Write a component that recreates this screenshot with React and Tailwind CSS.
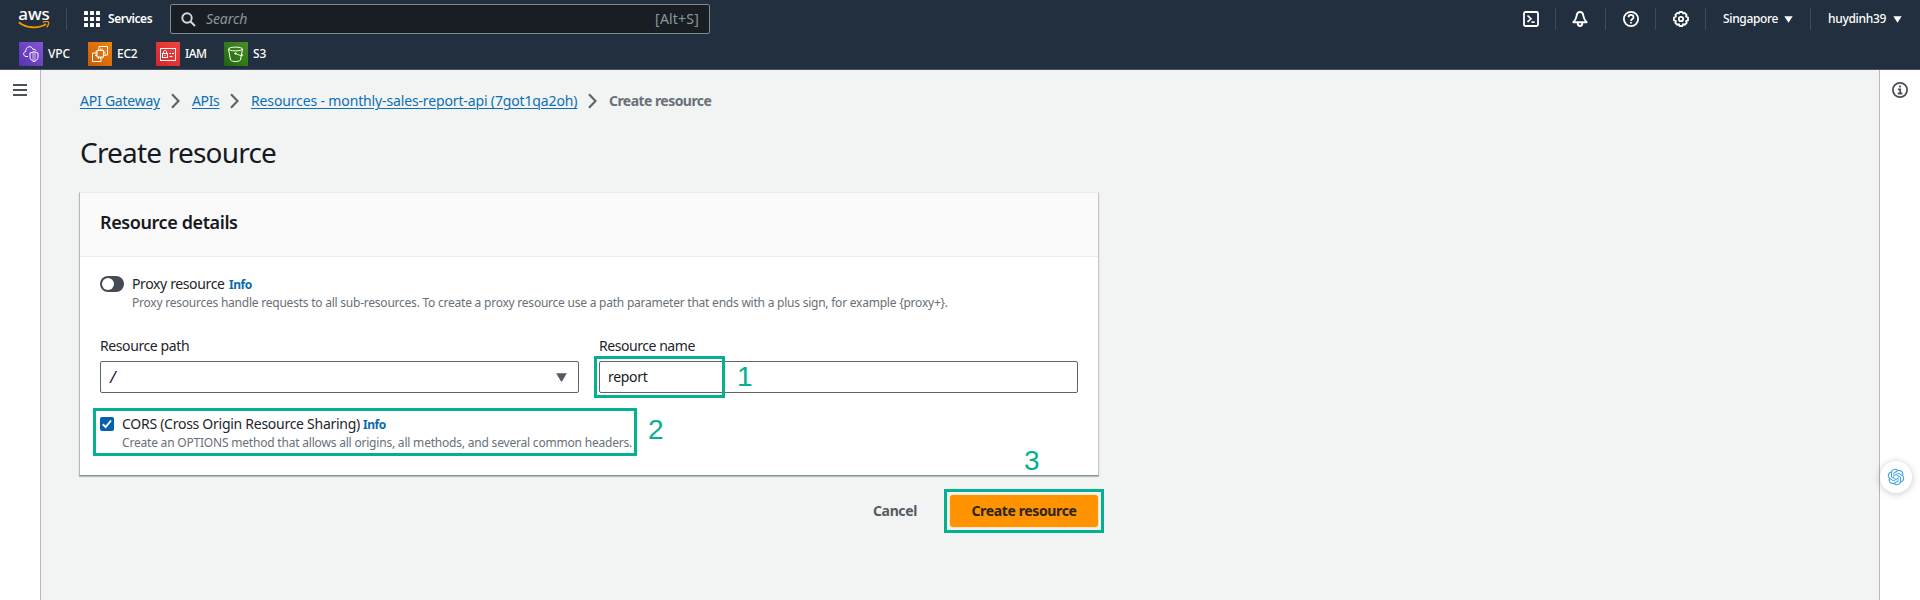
import { RiOpenaiFill } from "react-icons/ri";

function Sep() {
  return <div className="h-[22px] w-px shrink-0 bg-[#3c4a59]" />;
}

function AwsLogo() {
  return (
    <div className="flex w-[32px] flex-col items-center">
      <span className="h-[12px] text-[17px] leading-[9px] font-medium tracking-[-0.1px] text-white">aws</span>
      <svg width="32" height="8" viewBox="0 0 32 8" fill="none" stroke="#f79400">
        <path d="M0.8 1.2C8.5 7.6 20.5 7.8 28.2 3" strokeWidth="1.9" />
        <path d="M24.8 1.3C27 0.5 29.8 0.4 30.5 1.1S30.2 4.6 28.7 6.2" strokeWidth="1.3" />
      </svg>
    </div>
  );
}

function GridIcon() {
  const p = [0, 6, 12];
  return (
    <svg width="16" height="16" viewBox="0 0 16 16" fill="#fff">
      {p.map((y) => p.map((x) => <rect key={`${x}-${y}`} x={x} y={y} width="4" height="4" rx="0.6" />))}
    </svg>
  );
}

function VpcIcon() {
  return (
    <svg width="24" height="24" viewBox="0 0 24 24" fill="none" stroke="#fff" strokeWidth="1">
      <path d="M9 14.5H7c-3-.5-3.2-4.500-.2-5C6.500 4 12.500 3 14 7.500c1.500-.8 3 .3 2.800 1.800" />
      <path d="M11 11c1.800-.2 2.600-.8 4-1.500 1.200.7 2 1.300 4 1.500v4c0 2.500-2.200 3.800-4 4.700-1.800-.9-4-2.200-4-4.700z" />
      <path d="M14 10v9M16 10v9" strokeWidth="0.7" />
    </svg>
  );
}

function Ec2Icon() {
  return (
    <svg width="24" height="24" viewBox="0 0 24 24" fill="none" stroke="#fff" strokeWidth="1">
      <path d="M11 6.500V4.500h8.500v8.500h-2.500M7 11H4.500v8.500H13V17" />
      <rect x="9" y="8.500" width="6.500" height="6.500" />
      <path d="M10.500 6.500v2M12.250 6.500v2M14 6.500v2M10.500 15v2M12.250 15v2M14 15v2M7 10h2M7 11.750h2M7 13.500h2M15.500 10h2M15.500 11.750h2M15.500 13.500h2" strokeWidth="0.9" />
    </svg>
  );
}

function IamIcon() {
  return (
    <svg width="24" height="24" viewBox="0 0 24 24" fill="none" stroke="#fff" strokeWidth="1">
      <rect x="4.500" y="6.500" width="15" height="12" />
      <rect x="6.500" y="11.500" width="5" height="4" />
      <path d="M7.500 11.500V10c0-2 3-2 3 0v1.500M9 13v1M13.500 11.500H15M16 11.500h2M13.500 14.500h3" />
    </svg>
  );
}

function S3Icon() {
  return (
    <svg width="24" height="24" viewBox="0 0 24 24" fill="none" stroke="#fff" strokeWidth="1">
      <ellipse cx="11.500" cy="7" rx="7" ry="1.900" />
      <path d="M4.500 7l2 11c1.800 2 8.200 2 10 0l2-11" />
      <path d="M11.500 11.500c3 1.500 5.500 2.300 7 2.200.8-.5-.2-1.400-1-1.700" />
      <circle cx="11.500" cy="11.500" r="0.700" fill="#fff" />
    </svg>
  );
}

function Shell() {
  return (
    <svg width="16" height="16" viewBox="0 0 16 16" fill="none" stroke="#fff" strokeWidth="1.8">
      <rect x="1" y="1" width="14" height="14" rx="1.500" />
      <path d="M4.500 4.500L8 7.800l-3.500 3.200M8.500 11.200h3.200" strokeWidth="1.700" />
    </svg>
  );
}

function Bell() {
  return (
    <svg width="16" height="16" viewBox="0 0 16 16" fill="none" stroke="#fff" strokeWidth="1.9" strokeLinejoin="round">
      <path d="M8 1C5.800 1 4.800 3 4.600 5c-.3 2.800-1.200 4-3.300 6.300h13.400C12.600 9 11.700 7.800 11.400 5 11.200 3 10.200 1 8 1z" />
      <path d="M5.700 12c0 4 4.600 4 4.600 0" />
    </svg>
  );
}

function Help() {
  return (
    <svg width="16" height="16" viewBox="0 0 16 16" fill="none" stroke="#fff" strokeWidth="1.8">
      <circle cx="8" cy="8" r="7.100" />
      <path d="M5.500 6.200c0-3.200 5-3.200 5 0 0 1.700-2.500 1.800-2.500 3.800M8 11v1.600" />
    </svg>
  );
}

function Gear() {
  return (
    <svg width="16" height="16" viewBox="0 0 16 16" fill="none" stroke="#fff" strokeWidth="1.800" strokeLinejoin="round">
      <path d="M6.600 1h2.800l.6 1.500 1.600-.6 2 2-.6 1.500 2 1.200v2.800l-2 .8.700 1.700-2 2-1.700-.7L9.400 15H6.600L6 13.200l-1.700.7-2-2 .7-1.700-2-.8V6.600l2-1.200-.6-1.500 2-2 1.600.6z" />
      <circle cx="8" cy="8" r="2.200" />
    </svg>
  );
}

function Caret({ className }) {
  return (
    <svg width="9" height="7" viewBox="0 0 9 7" className={className}>
      <path d="M0.300 0.300h8.400L4.500 6.800z" fill="currentColor" />
    </svg>
  );
}

function Chevron() {
  return (
    <svg width="9" height="16" viewBox="0 0 9 16" fill="none" stroke="#5f6468" strokeWidth="2.200" className="shrink-0">
      <path d="M1 1.200L7.500 8 1 14.800" />
    </svg>
  );
}

const link = "text-[#0d6fb4] underline decoration-1 underline-offset-2";

export default function App() {
  return (
    <div className="flex h-[600px] w-[1920px] flex-col overflow-hidden bg-[#f2f4f4] font-['Noto_Sans',sans-serif] text-[14px] leading-[22px] text-[#16191f]">
      <header className="h-[70px] shrink-0 border-b border-[#4a5563] bg-[#222f3e] text-[12px] font-medium text-white">
        <div className="flex h-[38px] items-center pl-[18px]">
          <AwsLogo />
          <div className="ml-[16px] flex"><Sep /></div>
          <div className="ml-[17px] flex items-center gap-[8px]">
            <GridIcon />
            <span className="w-[62px] font-semibold tracking-[-0.45px]">Services</span>
          </div>
          <div className="flex h-[30px] w-[540px] items-center rounded-[2px] border border-[#7d8a8c] bg-[#191e24] pr-[10px] pl-[10px] text-[14px] font-normal text-[#8a9899]">
            <svg width="15" height="15" viewBox="0 0 15 15" fill="none" stroke="#d5dbdb" strokeWidth="1.900">
              <circle cx="6" cy="6" r="4.700" />
              <path d="M9.500 9.500l4.500 4.500" />
            </svg>
            <span className="ml-[10px] flex-1 tracking-[-0.1px] italic">Search</span>
            <span className="tracking-[0.2px]">[Alt+S]</span>
          </div>
          <div className="ml-auto flex items-center">
            <Shell />
            <div className="mx-[16px]"><Sep /></div>
            <Bell />
            <div className="mr-[17px] ml-[17px]"><Sep /></div>
            <Help />
            <div className="mr-[17px] ml-[16px]"><Sep /></div>
            <Gear />
            <div className="mr-[17px] ml-[16px]"><Sep /></div>
            <span className="w-[61px] tracking-[-0.35px]">Singapore</span>
            <Caret />
            <div className="mr-[17px] ml-[17px]"><Sep /></div>
            <span className="w-[65px] tracking-[-0.3px]">huydinh39</span>
            <Caret className="mr-[18px]" />
          </div>
        </div>
        <nav className="flex h-[24px] items-center pl-[19px] leading-[24px] [&>span]:ml-[5px]">
          <div className="mt-[8px] bg-gradient-to-tr from-[#5732b0] to-[#8455d8]"><VpcIcon /></div>
          <span className="mt-[7px] w-[40px] tracking-[-0.1px]">VPC</span>
          <div className="mt-[8px] bg-gradient-to-tr from-[#cc5a08] to-[#ea850f]"><Ec2Icon /></div>
          <span className="mt-[7px] w-[39px] tracking-[-0.3px]">EC2</span>
          <div className="mt-[8px] bg-gradient-to-tr from-[#d6242d] to-[#f04440]"><IamIcon /></div>
          <span className="mt-[7px] w-[39px] tracking-[-0.5px]">IAM</span>
          <div className="mt-[8px] bg-gradient-to-tr from-[#1b660f] to-[#4a8f22]"><S3Icon /></div>
          <span className="mt-[7px]">S3</span>
        </nav>
      </header>

      <div className="flex flex-1">
        <aside className="flex w-[41px] flex-col border-r border-[#b3b8ba] bg-white pt-[14px] pl-[13px]">
          <button className="flex w-[14px] flex-col gap-[3px]">
            <span className="h-[2px] bg-[#4c5156]" />
            <span className="h-[2px] bg-[#4c5156]" />
            <span className="h-[2px] bg-[#4c5156]" />
          </button>
        </aside>

        <main className="flex-1 pt-[20px] pl-[38px]">
          <nav className="flex items-center pl-px">
            <a className={`${link} w-[80px] tracking-[-0.230px] whitespace-nowrap`}>API Gateway</a>
            <div className="ml-[11px]"><Chevron /></div>
            <a className={`${link} ml-[12px] w-[27px] tracking-[-0.350px]`}>APIs</a>
            <div className="ml-[11px]"><Chevron /></div>
            <a className={`${link} ml-[12px] w-[326px] tracking-[-0.140px] whitespace-nowrap`}>Resources - monthly-sales-report-api (7got1qa2oh)</a>
            <div className="ml-[11px]"><Chevron /></div>
            <span className="ml-[12px] font-bold tracking-[-0.550px] text-[#687078]">Create resource</span>
          </nav>
          <h1 className="mt-[22px] pl-px text-[28px] leading-[36px] tracking-[-0.800px]">Create resource</h1>

          <div className="relative w-[1020px]">
            <section className="mt-[22px] h-[284px] border border-t-[#e9ebed] border-r-[#c3c7c9] border-b-[#8b9092] border-l-[#b4b9bb] bg-white px-[20px] shadow-[0_1px_1px_rgba(0,28,36,0.25)]">
              <div className="-mx-[20px] h-[64px] border-b border-[#eaeded] bg-[#fafafa] px-[20px] pt-[18px]">
                <h2 className="text-[18px] font-semibold tracking-[-0.400px]">Resource details</h2>
              </div>
              <div className="flex items-start pt-[16px]">
                <div className="mt-[3px] h-[16px] w-[24px] rounded-full bg-[#444b54] p-[2px]">
                  <div className="h-[12px] w-[12px] rounded-full bg-white" />
                </div>
                <div className="ml-[8px]">
                  <div className="flex items-baseline">
                    <span className="w-[97px] tracking-[-0.370px] whitespace-nowrap text-[#22262c]">Proxy resource</span>
                    <a className="text-[12px] font-bold tracking-[-0.450px] text-[#0a69ae]">Info</a>
                  </div>
                  <p className="-mt-px text-[12px] leading-[16px] tracking-[-0.230px] whitespace-nowrap text-[#687078]">
                    Proxy resources handle requests to all sub-resources. To create a proxy resource use a path parameter that ends with a plus sign, for example {"{proxy+}"}.
                  </p>
                </div>
              </div>
              <div className="mt-[24px] flex gap-[20px]">
                <div className="w-[479px]">
                  <label className="block tracking-[-0.400px] text-[#22262c]">Resource path</label>
                  <div className="mt-[4px] flex h-[32px] items-center justify-between rounded-[2px] border border-[#5f6569] pr-[11px] pl-[9px]">
                    <span className="text-[16px] italic">/</span>
                    <svg width="11" height="9" viewBox="0 0 11 9"><path d="M0.200 0.300h10.600L6 8.600H5z" fill="#545b64" /></svg>
                  </div>
                </div>
                <div className="w-[479px]">
                  <label className="block tracking-[-0.450px] text-[#22262c]">Resource name</label>
                  <div className="mt-[4px] flex h-[32px] items-center rounded-[2px] border border-[#5f6569] pl-[8px] tracking-[-0.300px]">report</div>
                </div>
              </div>
              <div className="mt-[20px] flex items-start">
                <div className="mt-[4px] flex h-[14px] w-[14px] items-center justify-center rounded-[2px] bg-[#0561b0]">
                  <svg width="10" height="10" viewBox="0 0 10 10" fill="none" stroke="#fff" strokeWidth="1.900"><path d="M0.800 5.200l2.900 2.800L9 1.500" /></svg>
                </div>
                <div className="ml-[8px]">
                  <div className="flex items-baseline">
                    <span className="w-[241px] tracking-[-0.270px] whitespace-nowrap text-[#22262c]">CORS (Cross Origin Resource Sharing)</span>
                    <a className="text-[12px] font-bold tracking-[-0.450px] text-[#0a69ae]">Info</a>
                  </div>
                  <p className="-mt-px text-[12px] leading-[16px] tracking-[-0.200px] whitespace-nowrap text-[#687078]">
                    Create an OPTIONS method that allows all origins, all methods, and several common headers.
                  </p>
                </div>
              </div>
            </section>

            <div className="mt-[19px] flex items-center justify-end pr-px text-[14px] font-bold">
              <button className="mr-[33px] w-[44px] tracking-[-0.370px] text-[#545b64]">Cancel</button>
              <button className="h-[32px] w-[148px] rounded-[2px] bg-[#ff9300] tracking-[-0.370px] whitespace-nowrap text-[#2a2416] outline outline-[#f8e7c4]">Create resource</button>
            </div>

            <div className="absolute top-[164px] left-[515px] h-[42px] w-[131px] border-[3px] border-[#05b092]" />
            <div className="absolute top-[216px] left-[14px] h-[48px] w-[544px] border-[3px] border-[#05b092]" />
            <div className="absolute top-[297px] left-[865px] h-[44px] w-[160px] border-[3px] border-[#05b092]" />
            <div className="font-['Liberation_Sans',sans-serif] text-[28px] leading-[28px] text-[#05b092]">
              <span className="absolute top-[171px] left-[658px]">1</span>
              <span className="absolute top-[224px] left-[569px]">2</span>
              <span className="absolute top-[255px] left-[945px]">3</span>
            </div>
          </div>
        </main>

        <aside className="relative flex w-[41px] justify-center border-l border-[#b3b8ba] bg-white pt-[12px]">
          <svg width="16" height="16" viewBox="0 0 16 16" fill="none" stroke="#4c5156" strokeWidth="1.800">
            <circle cx="8" cy="8" r="7.100" />
            <path d="M8 3.600v2M6 7.400h2.200v4M5.800 11.500h4.600" />
          </svg>
          <div className="absolute top-[391px] left-0 flex h-[32px] w-[32px] items-center justify-center rounded-full bg-white shadow-[0_1px_7px_rgba(0,0,0,0.22)]">
            <RiOpenaiFill size={20} color="#43a6e0" />
          </div>
        </aside>
      </div>
    </div>
  );
}
